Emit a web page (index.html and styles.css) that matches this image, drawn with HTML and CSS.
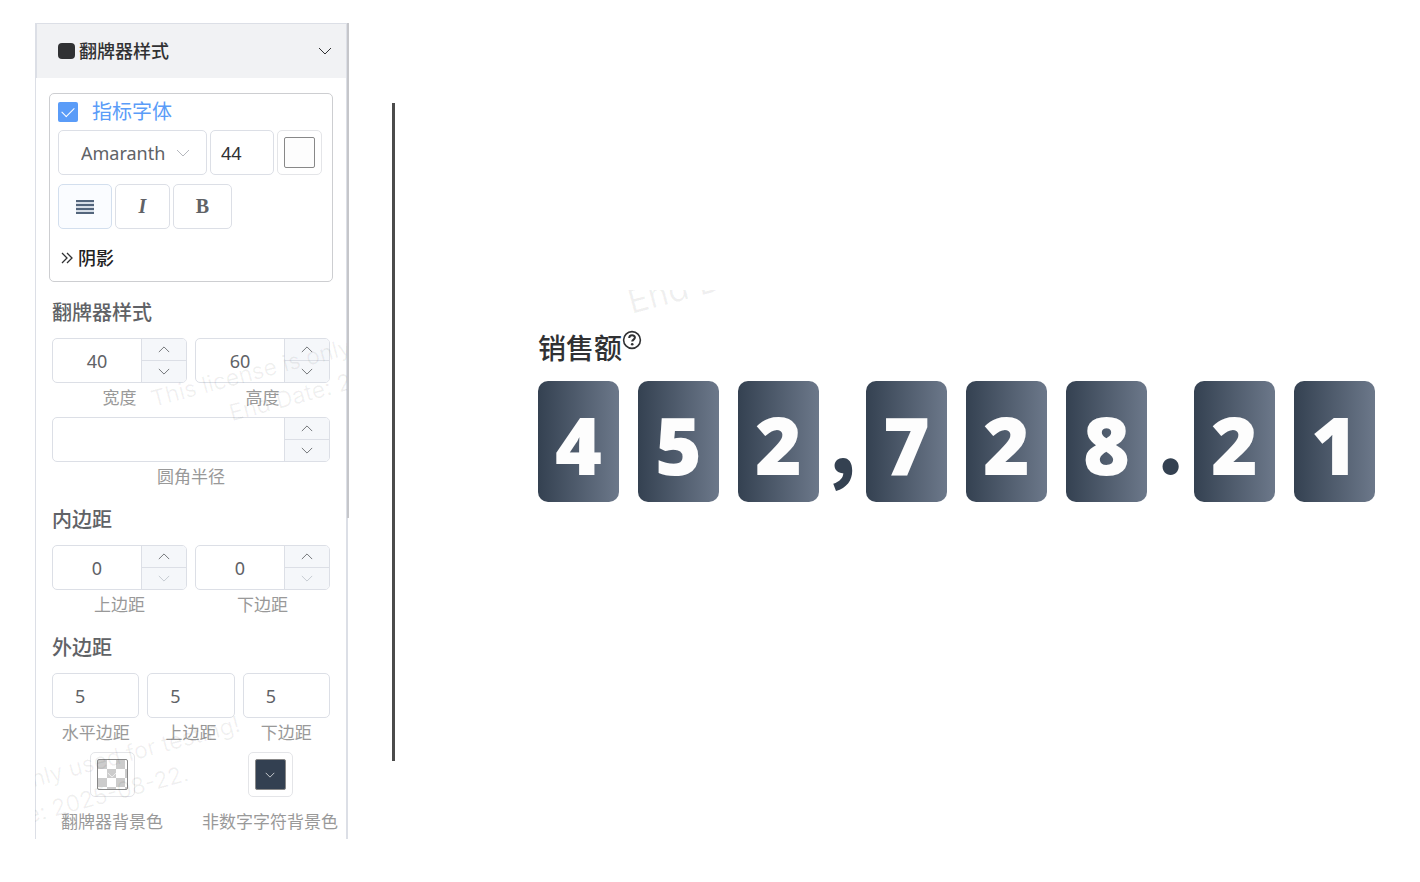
FILE: index.html
```html
<!DOCTYPE html>
<html lang="zh-CN">
<head>
    <meta charset="UTF-8">
    <meta name="viewport" content="width=device-width, initial-scale=1.0">
    <title>翻牌器样式</title>
    <link rel="stylesheet" href="styles.css">
</head>
<body>
    <!-- shared icons -->
    <svg class="sprite" aria-hidden="true">
        <symbol id="down" viewBox="0 0 14 8"><path d="M1 1l6 6 6-6" fill="none" stroke="currentColor"/></symbol>
        <symbol id="up" viewBox="0 0 14 8"><path d="M1 7l6-6 6 6" fill="none" stroke="currentColor"/></symbol>
    </svg>

    <main class="layout">
        <aside class="panel">
            <button class="panel-header" type="button">
                <span class="square"></span>
                <span class="panel-title">翻牌器样式</span>
                <svg class="arrow"><use href="#down"/></svg>
            </button>

            <div class="panel-body">
                <section class="font-box">
                    <label class="check-line">
                        <input type="checkbox" checked>
                        <span>指标字体</span>
                    </label>
                    <div class="font-row">
                        <div class="select-wrap">
                            <select aria-label="字体"><option>Amaranth</option></select>
                            <svg class="arrow"><use href="#down"/></svg>
                        </div>
                        <input class="field size-input" type="text" value="44" aria-label="字号">
                        <button class="color-picker" type="button" aria-label="颜色"><span class="swatch"></span></button>
                    </div>
                    <div class="style-row">
                        <button class="style-btn active" type="button" aria-label="对齐">
                            <svg width="18" height="14" viewBox="0 0 18 14"><path d="M0 1h18M0 5h18M0 9h18M0 13h18" stroke="#53657c" stroke-width="2"/><path d="M0 3h18M0 7h18M0 11h18" stroke="#b4c0cf"/></svg>
                        </button>
                        <button class="style-btn italic" type="button">I</button>
                        <button class="style-btn bold" type="button">B</button>
                    </div>
                    <button class="shadow-toggle" type="button">
                        <svg width="12" height="12" viewBox="0 0 12 12"><path d="M1 1l5 5-5 5M6 1l5 5-5 5" fill="none" stroke="#303133" stroke-width="1.3"/></svg>
                        <span>阴影</span>
                    </button>
                </section>

                <h3 class="group-title">翻牌器样式</h3>
                <div class="row">
                    <div class="item">
                        <div class="stepper">
                            <input id="width" type="text" value="40">
                            <div class="steps">
                                <button type="button" aria-label="增加"><svg><use href="#up"/></svg></button>
                                <button type="button" aria-label="减少"><svg><use href="#down"/></svg></button>
                            </div>
                        </div>
                        <label for="width">宽度</label>
                    </div>
                    <div class="item">
                        <div class="stepper">
                            <input id="height" type="text" value="60">
                            <div class="steps">
                                <button type="button" aria-label="增加"><svg><use href="#up"/></svg></button>
                                <button type="button" aria-label="减少"><svg><use href="#down"/></svg></button>
                            </div>
                        </div>
                        <label for="height">高度</label>
                    </div>
                </div>
                <div class="row next">
                    <div class="item">
                        <div class="stepper">
                            <input id="radius" type="text" value="">
                            <div class="steps">
                                <button type="button" aria-label="增加"><svg><use href="#up"/></svg></button>
                                <button type="button" aria-label="减少"><svg><use href="#down"/></svg></button>
                            </div>
                        </div>
                        <label for="radius">圆角半径</label>
                    </div>
                </div>

                <h3 class="group-title">内边距</h3>
                <div class="row">
                    <div class="item">
                        <div class="stepper">
                            <input id="pad-top" type="text" value="0">
                            <div class="steps">
                                <button type="button" aria-label="增加"><svg><use href="#up"/></svg></button>
                                <button type="button" aria-label="减少" disabled><svg><use href="#down"/></svg></button>
                            </div>
                        </div>
                        <label for="pad-top">上边距</label>
                    </div>
                    <div class="item">
                        <div class="stepper">
                            <input id="pad-bottom" type="text" value="0">
                            <div class="steps">
                                <button type="button" aria-label="增加"><svg><use href="#up"/></svg></button>
                                <button type="button" aria-label="减少" disabled><svg><use href="#down"/></svg></button>
                            </div>
                        </div>
                        <label for="pad-bottom">下边距</label>
                    </div>
                </div>

                <h3 class="group-title">外边距</h3>
                <div class="row">
                    <div class="item">
                        <input id="margin-x" class="field margin-input" type="text" value="5">
                        <label for="margin-x">水平边距</label>
                    </div>
                    <div class="item">
                        <input id="margin-top" class="field margin-input" type="text" value="5">
                        <label for="margin-top">上边距</label>
                    </div>
                    <div class="item">
                        <input id="margin-bottom" class="field margin-input" type="text" value="5">
                        <label for="margin-bottom">下边距</label>
                    </div>
                </div>

                <div class="color-row">
                    <div class="color-item">
                        <button id="card-bg" class="color-picker" type="button"><span class="swatch checker"><svg><use href="#down"/></svg></span></button>
                        <label for="card-bg">翻牌器背景色</label>
                    </div>
                    <div class="color-item">
                        <button id="char-bg" class="color-picker" type="button"><span class="swatch dark"><svg><use href="#down"/></svg></span></button>
                        <label for="char-bg">非数字字符背景色</label>
                    </div>
                </div>
            </div>

            <div class="watermark mark-top">This license is only<br><span>End Date: 2</span></div>
            <div class="watermark mark-bottom">nly used for testing!<br><span>e: 2025-08-22.</span></div>
            <div class="scrollbar"></div>
        </aside>

        <div class="divider"></div>

        <section class="preview">
            <div class="mark-clip"><span class="watermark">End D</span></div>
            <h2 class="kpi-title">销售额<svg width="20" height="20" viewBox="0 0 20 20"><circle cx="10" cy="10" r="8.4" fill="none" stroke="#303133" stroke-width="1.6"/><path d="M7.2 8c0-3.6 5.7-3.5 5.7-.4 0 2-2.7 2-2.7 4" fill="none" stroke="#303133" stroke-width="2"/><circle cx="10.2" cy="14.2" r="1.3" fill="#303133"/></svg></h2>
            <div class="flipper">
                <div class="group">
                    <span class="card">4</span>
                    <span class="card">5</span>
                    <span class="card">2</span>
                </div>
                <span class="sep">,</span>
                <div class="group">
                    <span class="card">7</span>
                    <span class="card">2</span>
                    <span class="card">8</span>
                </div>
                <span class="sep">.</span>
                <div class="group">
                    <span class="card">2</span>
                    <span class="card">1</span>
                </div>
            </div>
        </section>
    </main>
</body>
</html>
```
FILE: styles.css
```css
:root {
    --border: #dcdfe6;
    --text: #606266;
    --dark: #303133;
    --blue: #5a9cf8;
    --navy: #344151;
}

* {
    box-sizing: border-box;
}

body {
    margin: 0;
    background: #fff;
    color: var(--text);
    font-family: "Noto Sans", "Noto Sans CJK SC", sans-serif;
    font-size: 18px;
}

button, input, select {
    font: inherit;
    color: inherit;
    margin: 0;
    padding: 0;
}

button {
    cursor: pointer;
}

.sprite {
    display: none;
}

.layout {
    display: grid;
    grid-template-columns: minmax(314px, 22%) 3px 1fr;
    column-gap: 43px;
    padding: 23px 35px 43px;
}

/* left panel */
.panel {
    position: relative;
    overflow: hidden;
    padding-right: 1px;
}

.panel-header {
    display: flex;
    align-items: center;
    gap: 4px;
    width: 100%;
    height: 55px;
    padding: 0 14px 0 21px;
    border: 2px solid var(--border);
    border-width: 1px 2px 0;
    background: #f1f2f4;
    color: var(--dark);
}

.square {
    width: 17px;
    height: 16px;
    border-radius: 4px;
    background: var(--dark);
}

.panel-title {
    font-weight: 500;
    line-height: 26px;
}

.arrow {
    width: 14px;
    height: 8px;
    margin-left: auto;
}

.panel-body {
    padding: 15px 16px 3px;
    border: 1px solid var(--border);
    border-width: 0 2px 0 1px;
}

.font-box {
    margin: 0 -3px;
    height: 189px;
    padding: 5px 8px;
    border: 1px solid #cdced1;
    border-radius: 5px;
}

.check-line {
    display: flex;
    align-items: center;
    gap: 14px;
    height: 26px;
    color: var(--blue);
    font-size: 20px;
    line-height: 26px;
}

.check-line input {
    appearance: none;
    width: 20px;
    height: 20px;
    border-radius: 2px;
    background: var(--blue);
    display: grid;
    place-items: center;
}

.check-line input::after {
    content: "";
    width: 11px;
    height: 6px;
    border: solid #fff;
    border-width: 0 0 1px 1px;
    transform: translateY(-2px) rotate(-45deg);
}

.font-row {
    display: flex;
    gap: 3px;
    margin-top: 5px;
}

.field, .select-wrap, .style-btn, .stepper, .color-picker {
    height: 45px;
    border: 1px solid var(--border);
    border-radius: 5px;
    background: #fff;
}

.select-wrap {
    display: flex;
    align-items: center;
    width: 149px;
    padding: 0 16px 0 22px;
}

.select-wrap select {
    appearance: none;
    border: 0;
    background: none;
    flex: 1;
    min-width: 0;
    height: 100%;
}

.select-wrap .arrow {
    color: #b5b8be;
}

.size-input {
    width: 64px;
    padding-left: 10px;
    color: var(--dark);
}

.color-picker {
    display: grid;
    place-items: center;
    width: 45px;
    border-color: #e4e5e8;
}

.swatch {
    display: grid;
    place-items: center;
    width: 31px;
    height: 31px;
    border: 1px solid #888;
    border-radius: 2px;
    background: #fdfdfd;
    color: #fff;
}

.swatch svg {
    width: 10px;
    height: 6px;
}

.checker {
    background: repeating-conic-gradient(#fff 0 25%, #ccc 0 50%) 0 0 / 18px 18px;
}

.dark {
    background: #334051;
}

.style-row {
    display: flex;
    gap: 3px;
    margin-top: 9px;
}

.style-btn {
    display: grid;
    place-items: center;
    width: 54px;
    font-family: "Liberation Serif", serif;
    font-size: 20px;
    font-weight: bold;
}

.style-btn.active {
    background: #fafcff;
    border-color: #d3dfee;
}

.style-btn.italic {
    width: 55px;
    font-style: italic;
}

.style-btn.bold {
    width: 59px;
}

.shadow-toggle {
    display: flex;
    align-items: center;
    gap: 5px;
    margin: 16px 0 0 3px;
    border: 0;
    background: none;
    color: #222;
    font-weight: 500;
    line-height: 26px;
}

.group-title {
    margin: 16px 0 12px;
    font-size: 20px;
    font-weight: 500;
    line-height: 26px;
}

.font-box + .group-title {
    margin-top: 18px;
}

.row {
    display: flex;
    gap: 8px;
}

.row.next {
    margin-top: 5px;
}

.item {
    flex: 1;
    min-width: 0;
}

.item label, .color-item label {
    display: block;
    color: #999;
    font-size: 17px;
    line-height: 29px;
    text-align: center;
}

.stepper {
    display: flex;
    overflow: hidden;
}

.stepper input {
    flex: 1;
    min-width: 0;
    border: 0;
    background: none;
    text-align: center;
}

.steps {
    display: flex;
    flex-direction: column;
    width: 45px;
    border-left: 1px solid var(--border);
    background: #f5f7fa;
}

.steps button {
    display: grid;
    place-items: center;
    flex: 1;
    border: 0;
    background: none;
}

.steps button + button {
    border-top: 1px solid var(--border);
}

.steps button:disabled {
    color: #c0c4cc;
}

.steps svg {
    width: 12px;
    height: 7px;
}

.margin-input {
    display: block;
    width: 100%;
    padding-left: 22px;
}

.color-row {
    display: flex;
    justify-content: space-between;
    margin: 5px -8px 0 9px;
}

.color-item {
    display: flex;
    flex-direction: column;
    align-items: center;
    gap: 10px;
}

.scrollbar {
    position: absolute;
    top: 0;
    right: 0;
    width: 2px;
    height: 495px;
    background: #c5c6ca;
}

.watermark {
    position: absolute;
    color: rgba(0, 0, 0, 0.06);
    font-family: Inter, sans-serif;
    font-size: 23px;
    line-height: 34px;
    white-space: nowrap;
    transform: rotate(-15deg);
    transform-origin: 0 0;
    pointer-events: none;
}

.mark-top {
    top: 360px;
    left: 112px;
}

.mark-top span {
    margin-left: 72px;
}

.mark-bottom {
    top: 740px;
    left: -8px;
}

.mark-bottom span {
    margin-left: -14px;
}

/* line between panel and preview */
.divider {
    margin: 80px 0 78px;
    background: #4b4b4b;
}

/* right side */
.preview {
    position: relative;
    padding: 307px 0 0 100px;
}

.mark-clip {
    position: absolute;
    top: 267px;
    left: 180px;
    width: 101px;
    height: 40px;
    overflow: hidden;
}

.mark-clip .watermark {
    top: -4px;
    left: 6px;
    font-size: 34px;
}

.kpi-title {
    display: flex;
    margin: 0 0 15px;
    color: var(--dark);
    font-size: 28px;
    font-weight: 500;
    line-height: 36px;
}

.flipper, .group {
    display: flex;
}

.group {
    gap: 19px;
}

.card, .sep {
    height: 121px;
    padding-top: 5px;
    font-family: "Open Sans", sans-serif;
    font-size: 80px;
    font-weight: 800;
    line-height: 116px;
    text-align: center;
}

.card {
    width: 81px;
    border-radius: 10px;
    background: linear-gradient(90deg, #344151, #6c788a);
    color: #fdfdfd;
}

.sep {
    width: 47px;
    padding-top: 2px;
    color: var(--navy);
    font-family: "Noto Sans CJK SC", sans-serif;
    font-size: 76px;
    font-weight: 900;
}
```
